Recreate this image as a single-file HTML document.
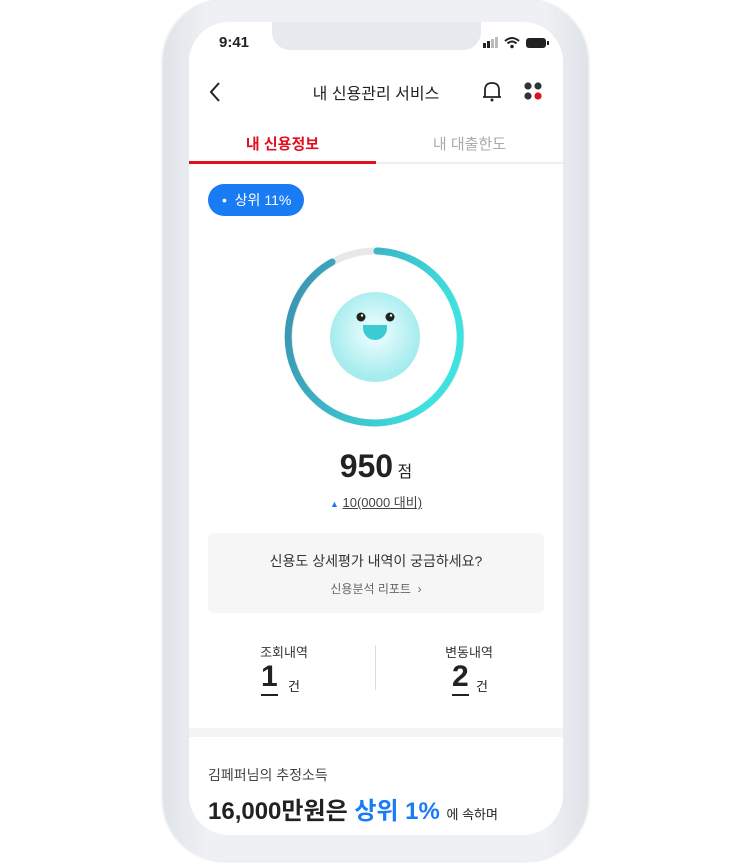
<!DOCTYPE html>
<html><head><meta charset="utf-8"><style>
*{margin:0;padding:0;box-sizing:border-box}
body{width:750px;height:863px;background:#fff;position:relative;overflow:hidden;font-family:"Liberation Sans","Noto Sans CJK KR",sans-serif;color:#222}
.frame{position:absolute;left:163px;top:0;width:425px;height:861px;border-radius:62px;background:linear-gradient(90deg,#dfe3e8,#eef0f3 10%,#eef0f3 90%,#dfe3e8);box-shadow:0 0 3px #c9cdd3}
.screen{position:absolute;left:189px;top:22px;width:374px;height:813px;border-radius:40px;background:#fff;overflow:hidden}
.notch{position:absolute;left:83px;top:0;width:209px;height:28px;background:#e6e9ee;border-radius:0 0 18px 18px}
.a{position:absolute}
</style></head><body>
<div class="frame"></div>
<div class="screen">
<div class="notch"></div>
<div class="a" style="left:30px;top:12px;font-size:15px;font-weight:bold">9:41</div>
<svg class="a" style="left:292px;top:14px" width="70" height="14">
<rect x="2" y="7" width="3" height="5" fill="#222"/><rect x="6" y="5" width="3" height="7" fill="#222"/><rect x="10" y="3" width="3" height="9" fill="#bbb"/><rect x="14" y="1" width="3" height="11" fill="#bbb"/>
<path d="M24 5 Q31 -1 38 5 M26.5 7.5 Q31 3.5 35.5 7.5" stroke="#222" stroke-width="2" fill="none"/><circle cx="31" cy="10.5" r="1.8" fill="#222"/>
<rect x="45" y="2" width="20" height="10" rx="3" fill="#222"/><rect x="66" y="5" width="2" height="4" fill="#222"/>
</svg>
<svg class="a" style="left:18px;top:59px" width="16" height="22"><path d="M12 2 L4 11 L12 20" stroke="#222" stroke-width="2" fill="none"/></svg>
<div class="a" style="left:0;width:374px;top:58px;text-align:center;font-size:16px">내 신용관리 서비스</div>
<svg class="a" style="left:292px;top:58px" width="22" height="24"><path d="M4 17 L4 10 Q4 3 11 3 Q18 3 18 10 L18 17 Z M2 17 H20" stroke="#222" stroke-width="1.8" fill="none" stroke-linejoin="round"/><circle cx="11" cy="20" r="1.5" fill="#222"/></svg>
<svg class="a" style="left:334px;top:59px" width="22" height="22"><circle cx="5" cy="5" r="3.6" fill="#333"/><circle cx="15" cy="5" r="3.6" fill="#333"/><circle cx="5" cy="15" r="3.6" fill="#333"/><circle cx="15" cy="15" r="3.6" fill="#e2101f"/></svg>
<div class="a" style="left:0;width:187px;top:111px;text-align:center;font-size:15px;color:#e2101f;font-weight:bold">내 신용정보</div>
<div class="a" style="left:187px;width:187px;top:111px;text-align:center;font-size:15px;color:#aaa">내 대출한도</div>
<div class="a" style="left:0;top:140px;width:374px;height:2px;background:#eee"></div>
<div class="a" style="left:0;top:139px;width:187px;height:3px;background:#e2101f"></div>
<div class="a" style="left:19px;top:162px;width:96px;height:32px;border-radius:16px;background:#1a7cf5;color:#fff;font-size:14px;line-height:32px;padding-left:14px">•&nbsp; 상위 11%</div>
<svg class="a" style="left:0;top:0" width="374" height="480">
<defs><linearGradient id="g" x1="0" y1="0" x2="1" y2="0.3"><stop offset="0" stop-color="#3a8fb0"/><stop offset="1" stop-color="#3ee3e0"/></linearGradient>
<radialGradient id="f" cx="0.5" cy="0.45" r="0.5"><stop offset="0" stop-color="#f2ffff"/><stop offset="1" stop-color="#a6ecee"/></radialGradient></defs>
<circle cx="186" cy="315" r="86" stroke="#e8e8e8" stroke-width="7" fill="none"/>
<path d="M188 229 A86 86 0 1 1 143 240" stroke="url(#g)" stroke-width="7" fill="none" stroke-linecap="round"/>
<circle cx="186" cy="315" r="45" fill="url(#f)"/>
<circle cx="172" cy="295" r="4.5" fill="#222"/><circle cx="201" cy="295" r="4.5" fill="#222"/>
<circle cx="173" cy="293.5" r="1.2" fill="#fff"/><circle cx="202" cy="293.5" r="1.2" fill="#fff"/>
<path d="M174 303 H198 V306 A12 12 0 0 1 174 306 Z" fill="#3bcbd3"/>
</svg>
<div class="a" style="left:0;width:374px;top:426px;text-align:center"><span style="font-size:32px;font-weight:bold">950</span> <span style="font-size:16px">점</span></div>
<div class="a" style="left:0;width:374px;top:470px;text-align:center;font-size:13px;color:#444"><span style="color:#1a7cf5;font-size:9px">▲</span> <span style="text-decoration:underline">10(0000 대비)</span></div>
<div class="a" style="left:19px;top:511px;width:336px;height:80px;background:#f6f6f6;border-radius:6px"></div>
<div class="a" style="left:0;width:374px;top:529px;text-align:center;font-size:14px;color:#333">신용도 상세평가 내역이 궁금하세요?</div>
<div class="a" style="left:0;width:374px;top:558px;text-align:center;font-size:12px;color:#666">신용분석 리포트 &nbsp;›</div>
<div class="a" style="left:186px;top:623px;width:1px;height:45px;background:#ddd"></div>
<div class="a" style="left:50px;width:90px;top:620px;text-align:center;font-size:13px;color:#333">조회내역</div>
<div class="a" style="left:235px;width:90px;top:620px;text-align:center;font-size:13px;color:#333">변동내역</div>
<div class="a" style="left:72px;top:638px;font-size:30px;font-weight:bold;border-bottom:2px solid #222;line-height:34px">1</div>
<div class="a" style="left:99px;top:654px;font-size:13px">건</div>
<div class="a" style="left:263px;top:638px;font-size:30px;font-weight:bold;border-bottom:2px solid #222;line-height:34px">2</div>
<div class="a" style="left:287px;top:654px;font-size:13px">건</div>
<div class="a" style="left:0;top:706px;width:374px;height:9px;background:#f4f4f4"></div>
<div class="a" style="left:19px;top:743px;font-size:14px;color:#444">김페퍼님의 추정소득</div>
<div class="a" style="left:19px;top:769px;font-size:24px;font-weight:bold;white-space:nowrap">16,000만원은 <span style="color:#1a7cf5">상위 1%</span> <span style="font-size:13px;font-weight:normal">에 속하며</span></div>
</div>
</body></html>
